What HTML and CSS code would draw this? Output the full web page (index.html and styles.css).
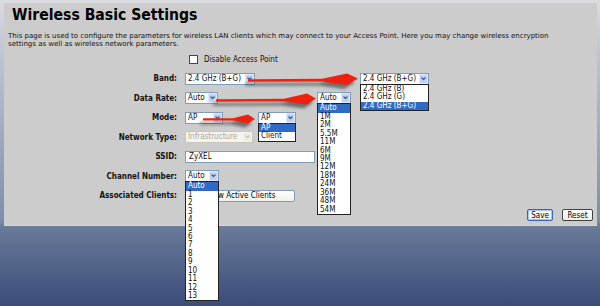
FILE: index.html
```html
<!DOCTYPE html>
<html lang="en">

<head>
    <meta charset="UTF-8">
    <title>Wireless Basic Settings</title>
    <link rel="stylesheet" href="styles.css">
</head>

<body>
    <div class="panel">
        <h1>Wireless Basic Settings</h1>
        <p class="intro">This page is used to configure the parameters for wireless LAN clients which may connect to your Access Point. Here you may change wireless encryption<br>settings as well as wireless network parameters.</p>

        <div class="form">
            <div class="row">
                <span class="label"></span>
                <label class="check"><span class="box"></span>Disable Access Point</label>
            </div>

            <div class="row">
                <span class="label">Band:</span>
                <div class="select w-band"><span class="value">2.4 GHz (B+G)</span><span class="btn"></span></div>
                <div class="select w-band-open open">
                    <span class="value">2.4 GHz (B+G)</span><span class="btn"></span>
                    <ul class="list">
                        <li>2.4 GHz (B)</li>
                        <li>2.4 GHz (G)</li>
                        <li class="sel">2.4 GHz (B+G)</li>
                    </ul>
                </div>
            </div>

            <div class="row">
                <span class="label">Data Rate:</span>
                <div class="select w-rate"><span class="value">Auto</span><span class="btn"></span></div>
                <div class="select w-rate-open open">
                    <span class="value">Auto</span><span class="btn"></span>
                    <ul class="list">
                        <li class="sel">Auto</li>
                        <li>1M</li>
                        <li>2M</li>
                        <li>5.5M</li>
                        <li>11M</li>
                        <li>6M</li>
                        <li>9M</li>
                        <li>12M</li>
                        <li>18M</li>
                        <li>24M</li>
                        <li>36M</li>
                        <li>48M</li>
                        <li>54M</li>
                    </ul>
                </div>
            </div>

            <div class="row">
                <span class="label">Mode:</span>
                <div class="select w-mode"><span class="value">AP</span><span class="btn"></span></div>
                <div class="select w-mode-open open">
                    <span class="value">AP</span><span class="btn"></span>
                    <ul class="list">
                        <li class="sel">AP</li>
                        <li>Client</li>
                    </ul>
                </div>
            </div>

            <div class="row">
                <span class="label">Network Type:</span>
                <div class="select w-net disabled"><span class="value">Infrastructure</span><span class="btn"></span></div>
            </div>

            <div class="row">
                <span class="label">SSID:</span>
                <div class="input">ZyXEL</div>
            </div>

            <div class="row">
                <span class="label">Channel Number:</span>
                <div class="select w-chan open">
                    <span class="value">Auto</span><span class="btn"></span>
                    <ul class="list">
                        <li class="sel">Auto</li>
                        <li>1</li>
                        <li>2</li>
                        <li>3</li>
                        <li>4</li>
                        <li>5</li>
                        <li>6</li>
                        <li>7</li>
                        <li>8</li>
                        <li>9</li>
                        <li>10</li>
                        <li>11</li>
                        <li>12</li>
                        <li>13</li>
                    </ul>
                </div>
            </div>

            <div class="row">
                <span class="label">Associated Clients:</span>
                <button class="wide">Show Active Clients</button>
            </div>

            <div class="row actions">
                <button class="save focus">Save</button>
                <button class="reset">Reset</button>
            </div>
        </div>
    </div>

    <!-- red callout arrows -->
    <svg class="arrows" width="600" height="306" viewBox="0 0 600 306">
        <defs>
            <filter id="blur" x="-20%" y="-100%" width="140%" height="300%">
                <feGaussianBlur stdDeviation="1.8" />
            </filter>
        </defs>
        <g class="shadow" filter="url(#blur)" transform="translate(-3 4)">
            <path d="M248 79.3 L322 78.8 L347 73.5 L358 78.6 L347 85 L322 81.4 L248 81.8 Z" />
            <path d="M216 99.3 L284 98.8 L307 93.5 L316 98.6 L307 104.5 L284 101.4 L216 101.8 Z" />
            <path d="M203 118.2 L233 118.2 L248 114.5 L255 119 L248 123.5 L233 120.6 L203 120.6 Z" />
        </g>
        <g class="red">
            <path d="M248 79.3 L322 78.8 L347 73.5 L358 78.6 L347 85 L322 81.4 L248 81.8 Z" />
            <path d="M216 99.3 L284 98.8 L307 93.5 L316 98.6 L307 104.5 L284 101.4 L216 101.8 Z" />
            <path d="M203 118.2 L233 118.2 L248 114.5 L255 119 L248 123.5 L233 120.6 L203 120.6 Z" />
        </g>
    </svg>
</body>

</html>
```

FILE: styles.css
```css
body {
    margin: 0;
    width: 600px;
    height: 306px;
    overflow: hidden;
    position: relative;
    font-family: "DejaVu Sans", Verdana, sans-serif;
    font-stretch: condensed;
    color: #111;
    background: linear-gradient(to bottom, #dcdde0 0, #c4c9d6 40px, #7f8dab 220px, #6a7a99 227px, #3a4d7a 306px);
}

.panel {
    margin: 3px 3px 0 4px;
    height: 223px;
    box-sizing: border-box;
    padding: 0 4px;
    background-color: #cccccc;
    border-bottom: 1px solid #d6d6d6;
}

h1 {
    margin: 0 0 0 4px;
    padding-top: 2px;
    font-size: 15.6px;
    line-height: 21px;
    font-weight: bold;
    color: #000;
}

.intro {
    margin: 6px 0 0;
    font-size: 7px;
    font-stretch: normal;
    line-height: 8.3px;
}

.form {
    margin-top: 1px;
}

.row {
    display: flex;
    align-items: center;
    height: 19.5px;
    font-size: 8px;
}

.label {
    width: 169px;
    flex: none;
    margin-right: 8px;
    text-align: right;
    font-weight: bold;
}

/* checkbox */
.check {
    display: flex;
    align-items: center;
    margin-left: 4px;
}

.check .box {
    width: 7px;
    height: 7px;
    margin-right: 6px;
    border: 1px solid #1c5180;
    background: #fff;
}

/* drop-down boxes drawn like XP controls */
.select {
    position: relative;
    display: flex;
    align-items: center;
    height: 12px;
    box-sizing: border-box;
    padding-left: 2px;
    border: 1px solid #7f9db9;
    background: #fff;
    white-space: nowrap;
}

.select .value {
    flex: 1;
    overflow: hidden;
    line-height: 10px;
}

.select .btn {
    width: 9px;
    height: 10px;
    flex: none;
    box-sizing: border-box;
    border: 1px solid #e1e9fb;
    background: #c1d2f6 url("data:image/svg+xml,%3Csvg xmlns='http://www.w3.org/2000/svg' width='7' height='8'%3E%3Cpath d='M1.5 2.5 L3.5 4.5 L5.5 2.5' fill='none' stroke='%234d6185' stroke-width='1.3'/%3E%3C/svg%3E") center / 7px 8px no-repeat;
}

.select.disabled {
    border-color: #c9c7ba;
    background: #f4f3ee;
    color: #aca899;
}

.select.disabled .btn {
    border-color: #f4f3ee;
    background: #eceae2 url("data:image/svg+xml,%3Csvg xmlns='http://www.w3.org/2000/svg' width='7' height='8'%3E%3Cpath d='M1.5 2.5 L3.5 4.5 L5.5 2.5' fill='none' stroke='%23c9c7ba' stroke-width='1.3'/%3E%3C/svg%3E") center / 7px 8px no-repeat;
}

.w-band { width: 70px; }
.w-band-open { width: 69px; margin-left: 105px; }
.w-rate { width: 33px; }
.w-rate-open { width: 34px; margin-left: 99px; }
.w-mode { width: 38px; }
.w-mode-open { width: 38px; margin-left: 35px; }
.w-net { width: 68px; }
.w-chan { width: 34px; }

.list {
    position: absolute;
    top: 100%;
    left: -1px;
    right: -1px;
    z-index: 2;
    margin: 0;
    padding: 0;
    list-style: none;
    border: 1px solid #222;
    background: #fff;
}

.list li {
    height: 8.45px;
    line-height: 8.45px;
    padding-left: 2px;
}

.list li.sel {
    background: #316ac5;
    color: #fff;
}

.input {
    width: 130px;
    height: 12px;
    box-sizing: border-box;
    padding-left: 3px;
    border: 1px solid #7f9db9;
    background: #fff;
    line-height: 10px;
}

button {
    height: 12px;
    padding: 0;
    font: inherit;
    font-size: 8px;
    line-height: 9px;
    color: #000;
    border: 1px solid #404040;
    border-radius: 2px;
    background: linear-gradient(#ffffff, #f0f0ea);
    cursor: pointer;
}

button.wide {
    width: 110px;
    border-color: #7f9db9;
}

button.focus {
    border-color: #3d64b4;
    box-shadow: inset 0 0 0 1px #a9c2ef;
}

.save { width: 26px; }
.reset { width: 31px; }

.actions {
    justify-content: flex-end;
    gap: 9px;
}

.arrows {
    position: absolute;
    top: 0;
    left: 0;
    pointer-events: none;
}

.arrows .shadow {
    fill: #222;
    opacity: 0.55;
}

.arrows .red {
    fill: #f0200e;
}
```
